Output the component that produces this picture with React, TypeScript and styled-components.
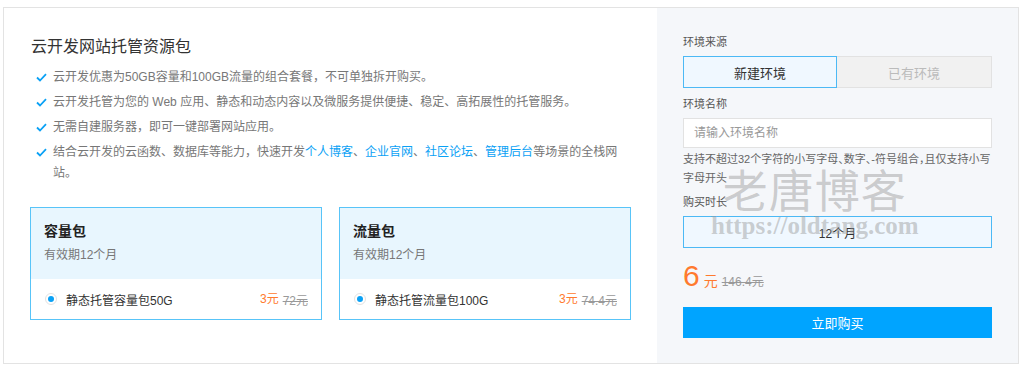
import React from "react";
import styled, { createGlobalStyle } from "styled-components";

const FONT = `"Liberation Sans", "Noto Sans CJK SC", sans-serif`;

const GlobalStyle = createGlobalStyle`
  html, body {
    margin: 0;
    padding: 0;
    background: #ffffff;
  }
  body {
    font-family: ${FONT};
  }
`;

const Page = styled.div`
  padding: 7px 6px 5px 3px;
`;

const Box = styled.div`
  position: relative;
  display: flex;
  width: 1016px;
  height: 357px;
  box-sizing: border-box;
  border: 1px solid #e3e3e3;
  background: #ffffff;
`;

const LeftPanel = styled.section`
  flex: 1;
  padding: 27px 0 0 26px;
`;

const Title = styled.h2`
  margin: 0 0 8px 1px;
  font-size: 16px;
  line-height: 24px;
  font-weight: 400;
  color: #333;
`;

const Features = styled.ul`
  margin: 0;
  padding: 0;
  list-style: none;
  width: 590px;
`;

const Feature = styled.li`
  display: flex;
  align-items: flex-start;
  margin-bottom: 4px;
  font-size: 12px;
  line-height: 21px;
  color: #777;
`;

const FeatureText = styled.div`
  flex: 1;
`;

const CheckIcon = styled.svg`
  flex: none;
  width: 11px;
  height: 9px;
  margin: 6px 6px 0 6px;
`;

const Link = styled.span`
  color: #0aa1f5;
`;

const Cards = styled.div`
  display: flex;
  gap: 17px;
  margin-top: 23px;
`;

const Card = styled.div`
  width: 292px;
  box-sizing: border-box;
  border: 1px solid #58c4f8;
`;

const CardHead = styled.div`
  background: #e8f6fe;
  padding: 13px 14px 15px 13px;
`;

const CardTitle = styled.div`
  font-size: 14px;
  line-height: 20px;
  font-weight: 700;
  color: #222;
`;

const CardSub = styled.div`
  margin-top: 5px;
  font-size: 12px;
  line-height: 18px;
  color: #777;
`;

const CardRow = styled.div`
  display: flex;
  align-items: center;
  height: 40px;
  padding: 0 13px 0 14px;
  font-size: 12px;
  color: #333;
`;

const Radio = styled.span`
  flex: none;
  display: flex;
  align-items: center;
  justify-content: center;
  width: 12px;
  height: 12px;
  box-sizing: border-box;
  border: 1px solid #e2e2e2;
  border-radius: 50%;
  margin-right: 9px;

  &::after {
    content: "";
    width: 6px;
    height: 6px;
    border-radius: 50%;
    background: #0aa1f5;
  }
`;

const RowName = styled.span`
  flex: 1;
`;

const Now = styled.span<{ $big?: boolean }>`
  color: #ff7a2e;
  font-size: ${(p) => (p.$big ? "30px" : "12px")};
  line-height: ${(p) => (p.$big ? "32px" : "18px")};
`;

const Old = styled.span`
  margin-left: 4px;
  color: #999;
  font-size: 12px;
  text-decoration: line-through;
`;

const RightPanel = styled.aside`
  width: 361px;
  box-sizing: border-box;
  padding: 25px 26px 0 26px;
  background: #f5f7fa;
`;

const Label = styled.div<{ $gap?: number }>`
  margin-top: ${(p) => p.$gap ?? 0}px;
  margin-bottom: 5px;
  font-size: 11px;
  line-height: 18px;
  color: #555;
`;

const Toggle = styled.div`
  display: grid;
  grid-template-columns: 154px 1fr;
`;

const ToggleOption = styled.div<{ $active?: boolean }>`
  height: 32px;
  box-sizing: border-box;
  display: flex;
  align-items: center;
  justify-content: center;
  font-size: 13px;
  border: 1px solid ${(p) => (p.$active ? "#4cb9f5" : "#e2e2e2")};
  border-left-width: ${(p) => (p.$active ? "1px" : "0")};
  background: ${(p) => (p.$active ? "#f0f8ff" : "#f1f1f1")};
  color: ${(p) => (p.$active ? "#333" : "#bbb")};
`;

const Input = styled.input`
  display: block;
  width: 100%;
  height: 30px;
  box-sizing: border-box;
  padding: 0 10px;
  border: 1px solid #e2e2e2;
  background: #ffffff;
  font-family: ${FONT};
  font-size: 12px;
  outline: none;

  &::placeholder {
    color: #999;
  }
`;

const Help = styled.p`
  margin: 2px 0 0;
  font-size: 11px;
  line-height: 19px;
  font-feature-settings: "halt";
  color: #666;
`;

const Select = styled.div`
  height: 32px;
  box-sizing: border-box;
  display: flex;
  align-items: center;
  justify-content: center;
  border: 1px solid #4cb9f5;
  background: #f0f8ff;
  font-size: 12px;
  color: #333;
`;

const PriceRow = styled.div`
  display: flex;
  align-items: baseline;
  margin-top: 12px;
  height: 36px;
`;

const Unit = styled.span`
  margin-left: 4px;
  color: #ff7a2e;
  font-size: 14px;
`;

const BuyButton = styled.button`
  display: block;
  width: 100%;
  height: 31px;
  margin-top: 11px;
  border: none;
  background: #00a4ff;
  color: #ffffff;
  font-family: ${FONT};
  font-size: 13px;
  cursor: pointer;
`;

const Watermark = styled.div`
  position: absolute;
  left: 707px;
  top: 155px;
  display: flex;
  flex-direction: column;
  align-items: center;
  pointer-events: none;
  color: rgba(150, 150, 150, 0.45);
`;

const MarkTitle = styled.span`
  font-family: "Noto Sans CJK SC", sans-serif;
  font-size: 45px;
  line-height: 52px;
  letter-spacing: 1px;
`;

const MarkUrl = styled.span`
  font-family: "Liberation Serif", serif;
  font-weight: 700;
  font-size: 25px;
  line-height: 28px;
  margin-top: -3px;
`;

function Check() {
  return (
    <CheckIcon viewBox="0 0 11 9">
      <polyline
        points="1,4.5 4,7.5 10,1.2"
        fill="none"
        stroke="#0aa1f5"
        strokeWidth="1.8"
      />
    </CheckIcon>
  );
}

const PACKS = [
  { title: "容量包", item: "静态托管容量包50G", old: "72元" },
  { title: "流量包", item: "静态托管流量包100G", old: "74.4元" },
];

export default function App() {
  return (
    <Page>
      <GlobalStyle />
      <Box>
        <LeftPanel>
          <Title>云开发网站托管资源包</Title>
          <Features>
            <Feature>
              <Check />
              <FeatureText>云开发优惠为50GB容量和100GB流量的组合套餐，不可单独拆开购买。</FeatureText>
            </Feature>
            <Feature>
              <Check />
              <FeatureText>
                云开发托管为您的 Web 应用、静态和动态内容以及微服务提供便捷、稳定、高拓展性的托管服务。
              </FeatureText>
            </Feature>
            <Feature>
              <Check />
              <FeatureText>无需自建服务器，即可一键部署网站应用。</FeatureText>
            </Feature>
            <Feature>
              <Check />
              <FeatureText>
                结合云开发的云函数、数据库等能力，快速开发<Link>个人博客</Link>、<Link>企业官网</Link>、<Link>社区论坛</Link>、<Link>管理后台</Link>等场景的全栈网站。
              </FeatureText>
            </Feature>
          </Features>

          <Cards>
            {PACKS.map((pack) => (
              <Card key={pack.title}>
                <CardHead>
                  <CardTitle>{pack.title}</CardTitle>
                  <CardSub>有效期12个月</CardSub>
                </CardHead>
                <CardRow>
                  <Radio />
                  <RowName>{pack.item}</RowName>
                  <Now>3元</Now>
                  <Old>{pack.old}</Old>
                </CardRow>
              </Card>
            ))}
          </Cards>
        </LeftPanel>

        <RightPanel>
          <Label>环境来源</Label>
          <Toggle>
            <ToggleOption $active>新建环境</ToggleOption>
            <ToggleOption>已有环境</ToggleOption>
          </Toggle>

          <Label $gap={7}>环境名称</Label>
          <Input placeholder="请输入环境名称" />
          <Help>支持不超过32个字符的小写字母、数字、-符号组合，且仅支持小写字母开头</Help>

          <Label $gap={5}>购买时长</Label>
          <Select>12个月</Select>

          <PriceRow>
            <Now $big>6</Now>
            <Unit>元</Unit>
            <Old>146.4元</Old>
          </PriceRow>
          <BuyButton>立即购买</BuyButton>
        </RightPanel>

        <Watermark>
          <MarkTitle>老唐博客</MarkTitle>
          <MarkUrl>https://oldtang.com</MarkUrl>
        </Watermark>
      </Box>
    </Page>
  );
}
